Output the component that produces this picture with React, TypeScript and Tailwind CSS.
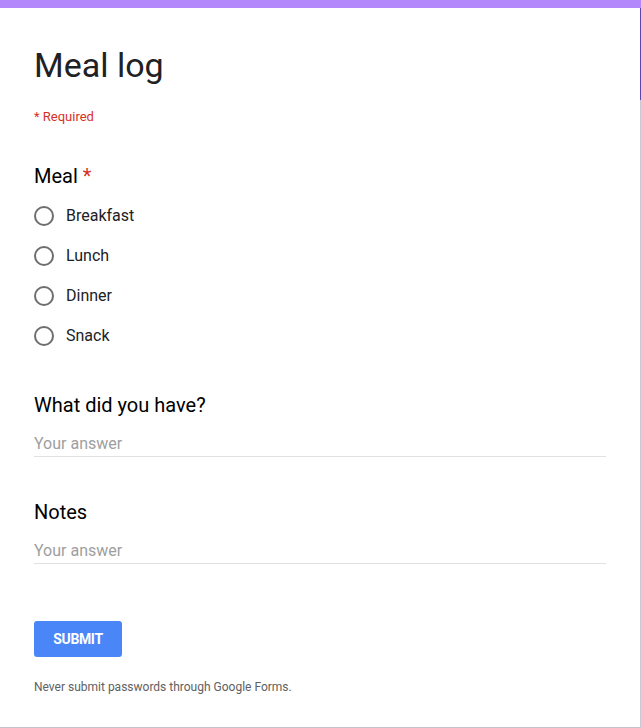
import React, { useState } from 'react';

const options = ['Breakfast', 'Lunch', 'Dinner', 'Snack'];

const App: React.FC = () => {
    const [meal, setMeal] = useState('');
    const [had, setHad] = useState('');
    const [notes, setNotes] = useState('');

    return (
        <div className="w-[641px] h-[728px] bg-white flex flex-col overflow-hidden" style={{ fontFamily: 'Roboto, "Liberation Sans", sans-serif' }}>
            <div className="h-[8px] bg-[#b388fb] shrink-0" />
            <div className="flex flex-1">
                <div className="w-[640px] flex flex-col">
                    <div className="flex-1 px-[34px]">
                        {/* header */}
                        <div className="pt-[34px] text-[34px] leading-[46px] text-[#202124]">Meal log</div>
                        <div className="mt-[21px] text-[13px] leading-[16px] text-[#d93025]">* Required</div>

                        {/* meal choice */}
                        <div className="mt-[39px] text-[20px] leading-[24px] text-black">
                            Meal <span className="text-[#d93025]">*</span>
                        </div>
                        <div className="mt-[8px] flex flex-col">
                            {options.map(o => (
                                <label key={o} className="h-[40px] flex items-center gap-[12px] cursor-pointer" onClick={() => setMeal(o)}>
                                    <span className="w-[20px] h-[20px] rounded-full border-2 border-[#6e6e6e] flex items-center justify-center">
                                        {meal === o && <span className="w-[10px] h-[10px] rounded-full bg-[#673ab7]" />}
                                    </span>
                                    <span className="text-[16px] text-[#202124]">{o}</span>
                                </label>
                            ))}
                        </div>

                        {/* short answer */}
                        <div className="mt-[37px] text-[20px] leading-[24px] text-black">What did you have?</div>
                        <input
                            className="mt-[17px] w-[572px] block border-b border-[#e0e0e0] pb-[2px] text-[16px] leading-[20px] text-[#202124] placeholder:text-[#9e9e9e] outline-none"
                            placeholder="Your answer"
                            value={had}
                            onChange={e => setHad(e.target.value)}
                        />

                        <div className="mt-[43px] text-[20px] leading-[24px] text-black">Notes</div>
                        <input
                            className="mt-[17px] w-[572px] block border-b border-[#e0e0e0] pb-[2px] text-[16px] leading-[20px] text-[#202124] placeholder:text-[#9e9e9e] outline-none"
                            placeholder="Your answer"
                            value={notes}
                            onChange={e => setNotes(e.target.value)}
                        />

                        <button type="button" className="mt-[57px] block w-[88px] h-[36px] rounded-[3px] bg-[#4a86f7] text-white text-[14px] font-bold tracking-tight">
                            SUBMIT
                        </button>
                        <div className="mt-[22px] text-[12px] leading-[16px] text-[#616161]">Never submit passwords through Google Forms.</div>
                    </div>
                    <div className="h-[1px] bg-[#c6c2cf]" />
                </div>
                <div className="w-[1px] flex flex-col">
                    <div className="h-[92px] bg-[#5e45b0]" />
                    <div className="flex-1 bg-[#cbc6d8]" />
                </div>
            </div>
        </div>
    );
};

export default App;
